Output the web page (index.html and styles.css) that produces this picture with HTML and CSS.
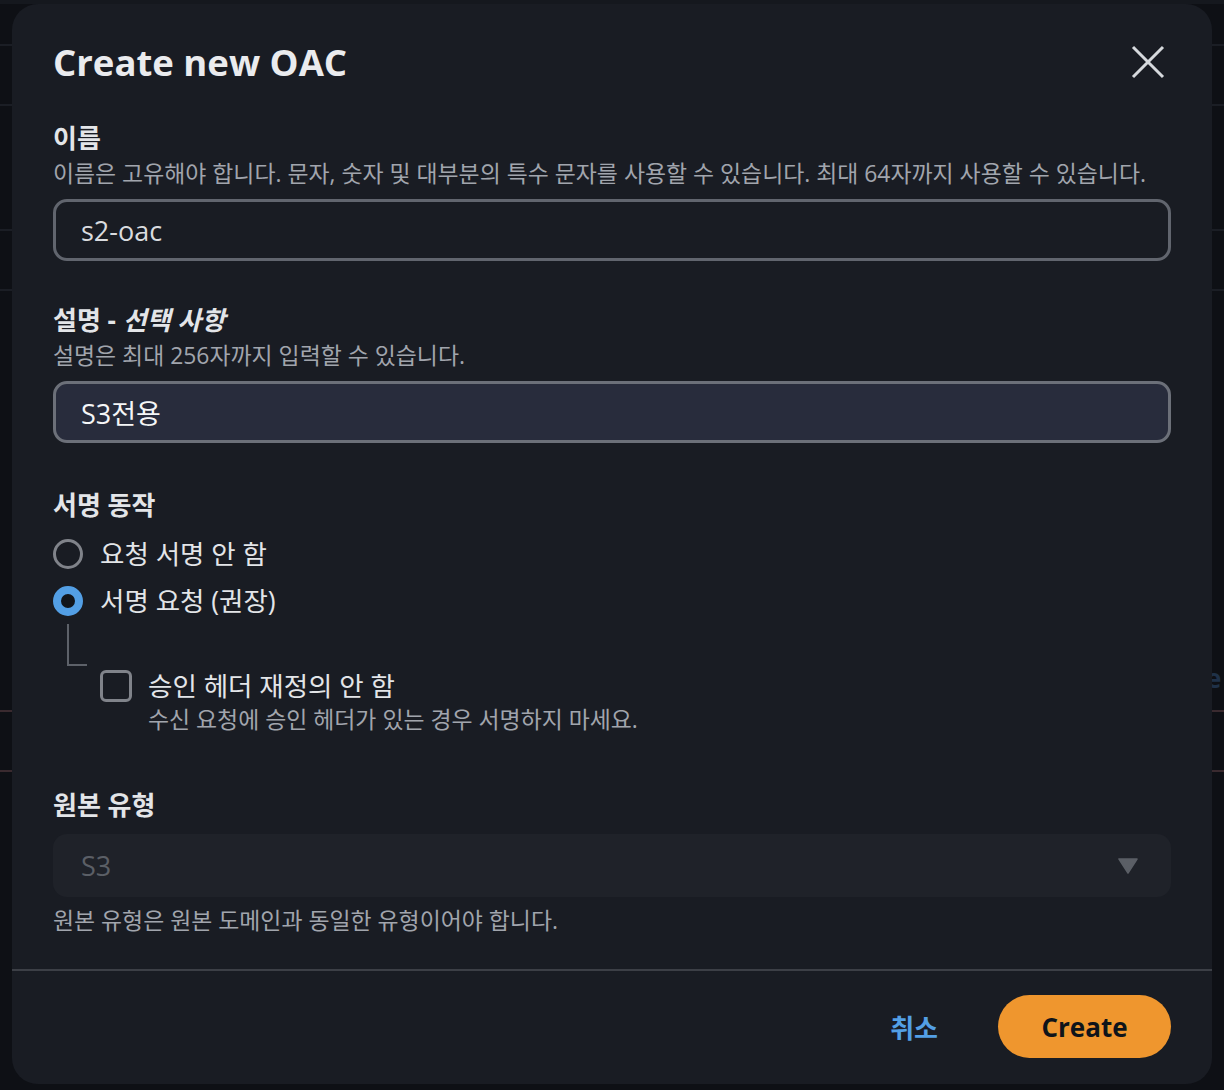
FILE: index.html
```html
<!DOCTYPE html>
<html lang="ko">
<head>
<meta charset="utf-8">
<title>Create new OAC</title>
<link rel="stylesheet" href="styles.css">
</head>
<body>
<div class="page">
  <div class="topstrip"></div>
  <div class="bgrow h40"></div>
  <div class="bgrow h58"></div>
  <div class="bgrow h123"></div>
  <div class="bgrow h58"></div>
  <div class="bgrow h417 alt"><span class="peek">e</span></div>
  <div class="bgrow h58 alt"></div>
</div>

<div class="modal" role="dialog" aria-labelledby="dlg-title">
  <header class="modal-head">
    <h1 id="dlg-title" class="title">Create new OAC</h1>
    <button class="close" aria-label="Close">
      <svg viewBox="0 0 34 34" width="34" height="34"><path d="M2 2 L32 32 M32 2 L2 32" stroke="currentColor" stroke-width="3" fill="none"/></svg>
    </button>
  </header>

  <div class="modal-body">
    <div class="field">
      <label class="label">이름</label>
      <div class="desc">이름은 고유해야 합니다. 문자, 숫자 및 대부분의 특수 문자를 사용할 수 있습니다. 최대 64자까지 사용할 수 있습니다.</div>
      <div class="input">s2-oac</div>
    </div>

    <div class="field">
      <label class="label">설명 - <i>선택 사항</i></label>
      <div class="desc">설명은 최대 256자까지 입력할 수 있습니다.</div>
      <div class="input active">S3전용</div>
    </div>

    <div class="field sig">
      <div class="label">서명 동작</div>
      <div class="radios">
        <div class="radio-row"><span class="radio"></span><span class="opt">요청 서명 안 함</span></div>
        <div class="radio-row"><span class="radio on"></span><span class="opt">서명 요청 (권장)</span></div>
      </div>
      <div class="connector"></div>
      <div class="check-row">
        <span class="checkbox"></span>
        <div class="check-text">
          <div class="opt">승인 헤더 재정의 안 함</div>
          <div class="desc">수신 요청에 승인 헤더가 있는 경우 서명하지 마세요.</div>
        </div>
      </div>
    </div>

    <div class="field last">
      <div class="label">원본 유형</div>
      <div class="select">
        <span>S3</span>
        <svg class="caret" viewBox="0 0 20 16" width="20" height="16"><path d="M1 1 H19 L10 15 Z" fill="currentColor" stroke="currentColor" stroke-width="1.5" stroke-linejoin="round"/></svg>
      </div>
      <div class="desc">원본 유형은 원본 도메인과 동일한 유형이어야 합니다.</div>
    </div>
  </div>

  <footer class="modal-foot">
    <button class="link-btn">취소</button>
    <button class="primary">Create</button>
  </footer>
</div>
</body>
</html>
```

FILE: styles.css
```css
* { box-sizing: border-box; }
html, body { margin: 0; padding: 0; }
body {
  width: 1224px;
  height: 1090px;
  overflow: hidden;
  background: #0e1015;
  font-family: "Open Sans", "Noto Sans CJK KR", sans-serif;
  position: relative;
}

/* background page (behind overlay) */
.page { display: flex; flex-direction: column; }
.topstrip { height: 4px; background: #15181e; }
.bgrow { border-bottom: 2px solid #1b1e25; position: relative; }
.bgrow.alt { border-bottom: 2px solid #3a2a2f; }
.h40 { height: 42px; }
.h58 { height: 60px; }
.h123 { height: 125px; }
.h417 { height: 421px; }
.peek {
  position: absolute;
  left: 1206px;
  bottom: 14px;
  color: #1f3148;
  font-size: 26px;
  font-weight: 700;
}

/* modal */
.modal {
  position: absolute;
  left: 12px;
  top: 4px;
  width: 1200px;
  height: 1080px;
  background: #191c23;
  border-radius: 26px;
  display: flex;
  flex-direction: column;
  color: #e3e5e8;
}
.modal-head {
  display: flex;
  justify-content: space-between;
  align-items: center;
  padding: 34px 47px 0 41px;
}
.title {
  margin: 0;
  font-size: 36.5px;
  line-height: 48px;
  font-weight: 700;
  color: #eaebee;
}
.close {
  background: none;
  border: 0;
  padding: 0;
  color: #d6d9dd;
  width: 34px;
  height: 34px;
  display: flex;
}
.modal-body {
  padding: 34px 41px 0 41px;
  display: flex;
  flex-direction: column;
  gap: 41px;
}
.field { display: flex; flex-direction: column; }
.label {
  font-size: 26px;
  line-height: 36px;
  font-weight: 700;
  color: #e3e5e8;
}
.label i { font-style: italic; }
.desc {
  font-size: 22.9px;
  line-height: 32px;
  color: #a1a5ad;
  margin-top: 2px;
}
.input {
  margin-top: 9px;
  height: 62px;
  border: 3px solid #61656e;
  border-radius: 14px;
  padding: 0 25px;
  display: flex;
  align-items: center;
  font-size: 27px;
  color: #d9dbdf;
}
.input.active {
  background: #282c3c;
  border-color: #6c7079;
  color: #f5f6f7;
}
.field.sig { margin-top: 3px; }
.radios { margin-top: 7px; display: flex; flex-direction: column; }
.radio-row {
  height: 47px;
  display: flex;
  align-items: center;
  gap: 17px;
}
.radio {
  width: 30px;
  height: 30px;
  border-radius: 50%;
  border: 3px solid #80838a;
  flex: none;
}
.radio.on {
  border: 8px solid #539fe5;
  background: #12151b;
}
.opt {
  font-size: 26.5px;
  line-height: 36px;
  color: #e3e5e8;
}
.connector {
  margin-left: 14px;
  width: 20px;
  height: 42px;
  border-left: 2px solid #5d6169;
  border-bottom: 2px solid #5d6169;
}
.check-row {
  display: flex;
  gap: 16px;
  margin-left: 47px;
  margin-top: 2px;
}
.checkbox {
  flex: none;
  width: 32px;
  height: 32px;
  margin-top: 2px;
  border: 3px solid #80838a;
  border-radius: 6px;
}
.check-text .desc { margin-top: 0; }
.field.last { margin-top: 10px; }
.select {
  margin-top: 11px;
  height: 63px;
  border-radius: 14px;
  background: #1f2229;
  display: flex;
  align-items: center;
  justify-content: space-between;
  padding: 0 33px 0 28px;
  font-size: 27px;
  color: #5b5f66;
}
.caret { color: #5b5f66; }
.field.last .desc { margin-top: 8px; }

.modal-foot {
  margin-top: auto;
  border-top: 2px solid #3c3f46;
  height: 115px;
  display: flex;
  justify-content: flex-end;
  align-items: center;
  gap: 60px;
  padding: 0 41px 2px 41px;
}
.link-btn {
  background: none;
  border: 0;
  padding: 0;
  font-family: inherit;
  font-size: 26px;
  font-weight: 700;
  color: #539fe5;
}
.primary {
  font-family: inherit;
  width: 173px;
  height: 63px;
  border: 0;
  border-radius: 32px;
  background: #ef962e;
  color: #0f141a;
  font-size: 26px;
  font-weight: 700;
}
```
